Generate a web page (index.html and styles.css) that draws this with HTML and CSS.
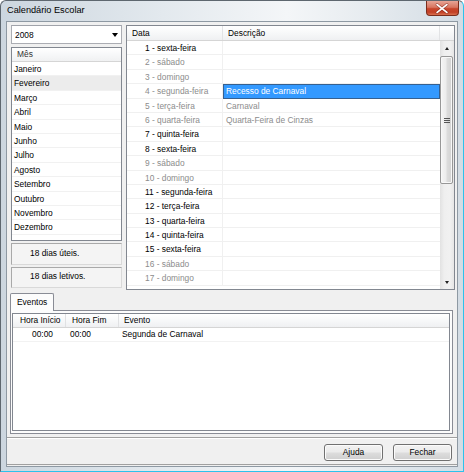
FILE: index.html
```html
<!DOCTYPE html>
<html lang="pt">
<head>
<meta charset="utf-8">
<title>Calendário Escolar</title>
<link rel="stylesheet" href="styles.css">
</head>
<body>
<div class="window">
  <div class="titlebar">
    <span class="title">Calendário Escolar</span>
    <div class="close">
      <svg width="33" height="15" viewBox="0 0 33 15">
        <path d="M11.5 3.5 L21.5 11.5 M21.5 3.5 L11.5 11.5" stroke="#6a1a10" stroke-width="3.2" stroke-linecap="round" fill="none" opacity="0.55"/>
        <path d="M11.5 3.5 L21.5 11.5 M21.5 3.5 L11.5 11.5" stroke="#ffffff" stroke-width="1.9" stroke-linecap="round" fill="none"/>
      </svg>
    </div>
  </div>
  <div class="client">
    <div class="top">
      <div class="leftcol">
        <div class="combo"><span>2008</span><span class="arrow"></span></div>
        <div class="months">
          <div class="mhead">Mês</div>
          <div class="mrow">Janeiro</div>
          <div class="mrow selected">Fevereiro</div>
          <div class="mrow">Março</div>
          <div class="mrow">Abril</div>
          <div class="mrow">Maio</div>
          <div class="mrow">Junho</div>
          <div class="mrow">Julho</div>
          <div class="mrow">Agosto</div>
          <div class="mrow">Setembro</div>
          <div class="mrow">Outubro</div>
          <div class="mrow">Novembro</div>
          <div class="mrow">Dezembro</div>
        </div>
        <div class="info first">18 dias úteis.</div>
        <div class="info second">18 dias letivos.</div>
      </div>
      <div class="grid">
        <div class="ghead">
          <div class="hc hdata">Data</div>
          <div class="hc hdesc">Descrição</div>
          <div class="hc hscroll"></div>
        </div>
        <div class="gbody">
          <div class="rows">
            <div class="grow"><div class="cdata">1 - sexta-feira</div><div class="cdesc"></div></div>
            <div class="grow"><div class="cdata off">2 - sábado</div><div class="cdesc"></div></div>
            <div class="grow"><div class="cdata off">3 - domingo</div><div class="cdesc"></div></div>
            <div class="grow"><div class="cdata off">4 - segunda-feira</div><div class="cdesc sel">Recesso de Carnaval</div></div>
            <div class="grow"><div class="cdata off">5 - terça-feira</div><div class="cdesc off">Carnaval</div></div>
            <div class="grow"><div class="cdata off">6 - quarta-feira</div><div class="cdesc off">Quarta-Feira de Cinzas</div></div>
            <div class="grow"><div class="cdata">7 - quinta-feira</div><div class="cdesc"></div></div>
            <div class="grow"><div class="cdata">8 - sexta-feira</div><div class="cdesc"></div></div>
            <div class="grow"><div class="cdata off">9 - sábado</div><div class="cdesc"></div></div>
            <div class="grow"><div class="cdata off">10 - domingo</div><div class="cdesc"></div></div>
            <div class="grow"><div class="cdata">11 - segunda-feira</div><div class="cdesc"></div></div>
            <div class="grow"><div class="cdata">12 - terça-feira</div><div class="cdesc"></div></div>
            <div class="grow"><div class="cdata">13 - quarta-feira</div><div class="cdesc"></div></div>
            <div class="grow"><div class="cdata">14 - quinta-feira</div><div class="cdesc"></div></div>
            <div class="grow"><div class="cdata">15 - sexta-feira</div><div class="cdesc"></div></div>
            <div class="grow"><div class="cdata off">16 - sábado</div><div class="cdesc"></div></div>
            <div class="grow"><div class="cdata off">17 - domingo</div><div class="cdesc"></div></div>
          </div>
          <div class="vscroll">
            <div class="sbtn"><span class="tri-up"></span></div>
            <div class="thumb"><span class="grip"></span><span class="grip"></span><span class="grip"></span></div>
            <div class="track"></div>
            <div class="sbtn"><span class="tri-down"></span></div>
          </div>
        </div>
      </div>
    </div>
    <div class="tabs">
      <div class="tabstrip"><div class="tab">Eventos</div></div>
      <div class="tabpanel">
        <div class="listview">
          <div class="lvhead">
            <div class="lc c1">Hora Início</div>
            <div class="lc c2">Hora Fim</div>
            <div class="lc c3">Evento</div>
          </div>
          <div class="lvrow">
            <div class="lr r1">00:00</div>
            <div class="lr r2">00:00</div>
            <div class="lr r3">Segunda de Carnaval</div>
          </div>
        </div>
      </div>
    </div>
    <div class="buttons">
      <button class="btn ajuda">Ajuda</button>
      <button class="btn fechar">Fechar</button>
    </div>
  </div>
</div>
</body>
</html>
```

FILE: styles.css
```css
html, body {
  margin: 0;
  padding: 0;
}

body {
  width: 464px;
  height: 472px;
  overflow: hidden;
  background: #ffffff;
  font-family: "Liberation Sans", Arial, sans-serif;
  font-size: 8.4px;
  color: #000;
}

.window {
  box-sizing: border-box;
  width: 464px;
  height: 472px;
  border: 1px solid #5e676f;
  border-right-color: #2cc2ec;
  border-bottom-color: #2cc2ec;
  border-radius: 6px 6px 0 0;
  background: linear-gradient(to right, #ccd6df 0%, #e3e9ee 35%, #f4f6f8 62%, #e6ebef 80%, #d3dce4 100%);
  display: flex;
  flex-direction: column;
}

.titlebar {
  height: 20px;
  display: flex;
  align-items: flex-start;
  flex-shrink: 0;
}

.title {
  font-size: 9.2px;
  line-height: 11px;
  padding: 4px 0 0 6px;
  color: #000;
}

.close {
  margin-left: auto;
  margin-right: 4px;
  width: 33px;
  height: 15px;
  box-sizing: border-box;
  border: 1px solid #7b2d1c;
  border-top: none;
  border-radius: 0 0 4px 4px;
  background: linear-gradient(#e7a596 0%, #d87560 45%, #c7452b 55%, #c24026 80%, #d9704f 100%);
  display: flex;
  align-items: center;
  justify-content: center;
}

.close svg {
  display: block;
  margin-left: -1px;
}

.client {
  margin: 0 5px 4px 5px;
  height: 446px;
  box-sizing: border-box;
  border: 1px solid #8e99a3;
  background: #f0f0f0;
  display: flex;
  flex-direction: column;
}

/* top area */
.top {
  box-sizing: border-box;
  height: 271px;
  padding: 3px 2px 0 4px;
  display: flex;
  gap: 4px;
  align-items: flex-start;
}

.leftcol {
  width: 111px;
  display: flex;
  flex-direction: column;
}

.combo {
  box-sizing: border-box;
  height: 19px;
  border: 1px solid #abadb3;
  border-top-color: #a0a3aa;
  background: #fff;
  display: flex;
  align-items: center;
  padding-left: 3px;
}

.arrow {
  margin-left: auto;
  margin-right: 3px;
  width: 0;
  height: 0;
  border-left: 3.5px solid transparent;
  border-right: 3.5px solid transparent;
  border-top: 4px solid #000;
}

.months {
  box-sizing: border-box;
  margin-top: 3px;
  height: 194px;
  border: 1px solid #828790;
  background: #fff;
}

.mhead {
  box-sizing: border-box;
  height: 14px;
  line-height: 13px;
  padding-left: 5px;
  border-bottom: 1px solid #d5d5d5;
  background: linear-gradient(#ffffff 0%, #f7f8f9 50%, #f0f1f2 100%);
  color: #333;
}

.mrow {
  box-sizing: border-box;
  height: 14.4px;
  line-height: 14px;
  padding-left: 2px;
  border-bottom: 1px solid #f1f1f1;
}

.mrow.selected {
  background: #ececec;
}

.info {
  box-sizing: border-box;
  border: 1px solid #a9a9a9;
  border-right-color: #d9d9d9;
  border-bottom-color: #d9d9d9;
  background: #f4f4f4;
  padding-left: 18px;
  line-height: 18px;
}

.info.first {
  margin-top: 2px;
  height: 22px;
}

.info.second {
  margin-top: 2px;
  height: 21px;
  line-height: 16px;
}

/* data grid */
.grid {
  box-sizing: border-box;
  width: 329px;
  height: 265px;
  border: 1px solid #828790;
  background: #fff;
  display: flex;
  flex-direction: column;
}

.ghead {
  box-sizing: border-box;
  height: 15px;
  display: flex;
  border-bottom: 1px solid #d5d5d5;
  background: linear-gradient(#ffffff 0%, #f7f8f9 50%, #eff0f2 100%);
  flex-shrink: 0;
}

.hc {
  box-sizing: border-box;
  line-height: 14px;
}

.hdata {
  width: 96px;
  padding-left: 5px;
  border-right: 1px solid #e2e3e5;
}

.hdesc {
  width: 217px;
  padding-left: 5px;
  border-right: 1px solid #e2e3e5;
}

.hscroll {
  flex: 1;
}

.gbody {
  flex: 1;
  display: flex;
}

.rows {
  width: 313px;
}

.grow {
  box-sizing: border-box;
  height: 14.4px;
  display: flex;
  border-bottom: 1px solid #f0f0f0;
}

.cdata {
  box-sizing: border-box;
  width: 96px;
  padding-left: 18px;
  line-height: 14px;
  border-right: 1px solid #f0f0f0;
  white-space: nowrap;
}

.cdesc {
  flex: 1;
  box-sizing: border-box;
  padding-left: 3px;
  line-height: 14px;
  white-space: nowrap;
}

.off {
  color: #8c8c8c;
}

.cdesc.sel {
  background: #3399ff;
  color: #fff;
  box-shadow: inset 0 0 0 1px #36608f;
  margin-bottom: -1px;
}

.vscroll {
  width: 14px;
  display: flex;
  flex-direction: column;
  background: linear-gradient(to right, #e2e2e2 0%, #efefef 30%, #f1f1f1 70%, #e6e6e6 100%);
}

.sbtn {
  height: 14px;
  display: flex;
  align-items: center;
  justify-content: center;
  flex-shrink: 0;
}

.tri-up {
  width: 0;
  height: 0;
  border-left: 2.5px solid transparent;
  border-right: 2.5px solid transparent;
  border-bottom: 3px solid #222;
}

.tri-down {
  width: 0;
  height: 0;
  border-left: 2.5px solid transparent;
  border-right: 2.5px solid transparent;
  border-top: 3px solid #222;
}

.thumb {
  box-sizing: border-box;
  margin: 1px 1px 0 0;
  height: 128px;
  border: 1px solid #979797;
  border-radius: 2px;
  background: linear-gradient(to right, #f5f5f5 0%, #ececec 45%, #dcdcdc 55%, #d2d2d2 100%);
  box-shadow: inset 0 0 0 1px #f8f8f8;
  display: flex;
  flex-direction: column;
  align-items: center;
  justify-content: center;
  gap: 1px;
}

.grip {
  display: block;
  width: 6px;
  height: 1px;
  background: #555;
}

.track {
  flex: 1;
}

/* tabs */
.tabs {
  margin-left: 3px;
  width: 443px;
}

.tabstrip {
  height: 17px;
  display: flex;
  position: relative;
  z-index: 1;
}

.tab {
  box-sizing: border-box;
  width: 44px;
  height: 18px;
  border: 1px solid #898c95;
  border-bottom: none;
  border-radius: 2px 2px 0 0;
  background: #fcfcfc;
  padding-left: 6px;
  line-height: 16px;
}

.tabpanel {
  box-sizing: border-box;
  height: 124px;
  border: 1px solid #898c95;
  background: #fcfcfc;
  padding: 2px 2px 2px 1px;
}

.listview {
  box-sizing: border-box;
  height: 118px;
  border: 1px solid #828790;
  background: #fff;
}

.lvhead {
  box-sizing: border-box;
  height: 14px;
  display: flex;
  border-bottom: 1px solid #d5d5d5;
  background: linear-gradient(#ffffff 0%, #f7f8f9 50%, #eff0f2 100%);
}

.lc {
  box-sizing: border-box;
  line-height: 13px;
}

.lc.c1 {
  width: 53px;
  padding-left: 7px;
  border-right: 1px solid #e0e1e3;
}

.lc.c2 {
  width: 53px;
  padding-left: 6px;
  border-right: 1px solid #e0e1e3;
}

.lc.c3 {
  flex: 1;
  padding-left: 5px;
}

.lvrow {
  box-sizing: border-box;
  height: 14px;
  display: flex;
  border-bottom: 1px solid #f2f2f2;
}

.lr {
  box-sizing: border-box;
  line-height: 13px;
  white-space: nowrap;
}

.lr.r1 {
  width: 53px;
  padding-left: 19px;
}

.lr.r2 {
  width: 53px;
  padding-left: 4px;
}

.lr.r3 {
  flex: 1;
  padding-left: 3px;
}

/* bottom buttons */
.buttons {
  box-sizing: border-box;
  margin-top: 3px;
  height: 28px;
  border-top: 1px solid #a0a0a0;
  border-bottom: 1px solid #a0a0a0;
  box-shadow: inset 0 1px 0 #ffffff;
  display: flex;
  justify-content: flex-end;
  align-items: flex-start;
  gap: 10px;
  padding: 6px 5px 0 0;
}

.btn {
  box-sizing: border-box;
  width: 59px;
  height: 17px;
  margin: 0;
  padding: 0;
  border: 1px solid #707070;
  border-radius: 3px;
  background: linear-gradient(#f2f2f2 0%, #ebebeb 48%, #dddddd 52%, #cfcfcf 100%);
  box-shadow: inset 0 0 0 1px #fbfbfb;
  font-family: "Liberation Sans", Arial, sans-serif;
  font-size: 8.4px;
  color: #000;
  line-height: 15px;
  text-align: center;
}
```
